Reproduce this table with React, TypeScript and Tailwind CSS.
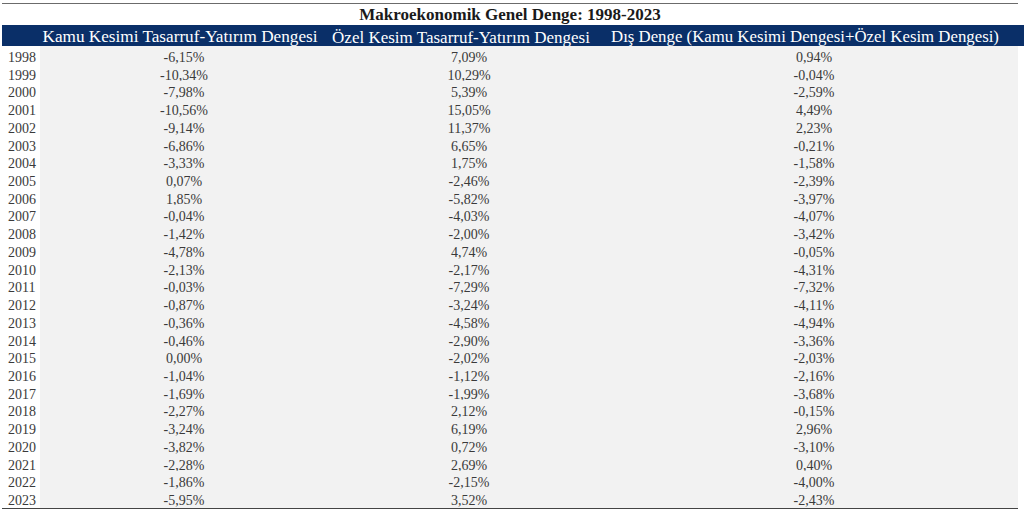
import React from 'react';

const rows: [string, string, string, string][] = [
  ['1998', '-6,15%', '7,09%', '0,94%'],
  ['1999', '-10,34%', '10,29%', '-0,04%'],
  ['2000', '-7,98%', '5,39%', '-2,59%'],
  ['2001', '-10,56%', '15,05%', '4,49%'],
  ['2002', '-9,14%', '11,37%', '2,23%'],
  ['2003', '-6,86%', '6,65%', '-0,21%'],
  ['2004', '-3,33%', '1,75%', '-1,58%'],
  ['2005', '0,07%', '-2,46%', '-2,39%'],
  ['2006', '1,85%', '-5,82%', '-3,97%'],
  ['2007', '-0,04%', '-4,03%', '-4,07%'],
  ['2008', '-1,42%', '-2,00%', '-3,42%'],
  ['2009', '-4,78%', '4,74%', '-0,05%'],
  ['2010', '-2,13%', '-2,17%', '-4,31%'],
  ['2011', '-0,03%', '-7,29%', '-7,32%'],
  ['2012', '-0,87%', '-3,24%', '-4,11%'],
  ['2013', '-0,36%', '-4,58%', '-4,94%'],
  ['2014', '-0,46%', '-2,90%', '-3,36%'],
  ['2015', '0,00%', '-2,02%', '-2,03%'],
  ['2016', '-1,04%', '-1,12%', '-2,16%'],
  ['2017', '-1,69%', '-1,99%', '-3,68%'],
  ['2018', '-2,27%', '2,12%', '-0,15%'],
  ['2019', '-3,24%', '6,19%', '2,96%'],
  ['2020', '-3,82%', '0,72%', '-3,10%'],
  ['2021', '-2,28%', '2,69%', '0,40%'],
  ['2022', '-1,86%', '-2,15%', '-4,00%'],
  ['2023', '-5,95%', '3,52%', '-2,43%'],
];

const cols = 'grid grid-cols-[38px_288px_282px_408px]';

export default function App() {
  return (
    <div
      className="w-[1024px] h-[512px] bg-white pl-[2px] pt-[3px] overflow-hidden"
      style={{ fontFamily: '"Liberation Serif", "DejaVu Serif", serif' }}
    >
      <div className="border-t border-[#6b6b6b] w-[1016px]" />
      <div className="w-[1016px] h-[21px] flex items-center justify-center text-[17px] font-bold text-[#1a1a1a] leading-none">
        Makroekonomik Genel Denge: 1998-2023
      </div>
      <div className={`${cols} h-[21px] pt-[3px] bg-[#0a2f68] text-white items-center leading-none`}>
        <div />
        <div className="flex justify-center pr-[8px] whitespace-nowrap text-[17.2px]">Kamu Kesimi Tasarruf-Yatırım Dengesi</div>
        <div className="flex justify-center pr-[16px] whitespace-nowrap text-[17px]">Özel Kesim Tasarruf-Yatırım Dengesi</div>
        <div className="flex justify-center pr-[18px] whitespace-nowrap text-[16.8px]">Dış Denge (Kamu Kesimi Dengesi+Özel Kesim Dengesi)</div>
      </div>
      <div>
        {rows.map((r) => (
          <div key={r[0]} className={`${cols} h-[17.72px] text-[14px] leading-none text-[#3a3a3a]`}>
            <div className="pl-[6px] pt-[5px] bg-white h-full flex items-center">{r[0]}</div>
            <div className="bg-[#f2f2f2] pt-[5px] h-full flex items-center justify-center">{r[1]}</div>
            <div className="bg-[#f2f2f2] pt-[5px] h-full flex items-center justify-center">{r[2]}</div>
            <div className="bg-[#f2f2f2] pt-[5px] h-full flex items-center justify-center">{r[3]}</div>
          </div>
        ))}
      </div>
      <div className="border-t-2 border-[#444] w-[1016px]" />
    </div>
  );
}
